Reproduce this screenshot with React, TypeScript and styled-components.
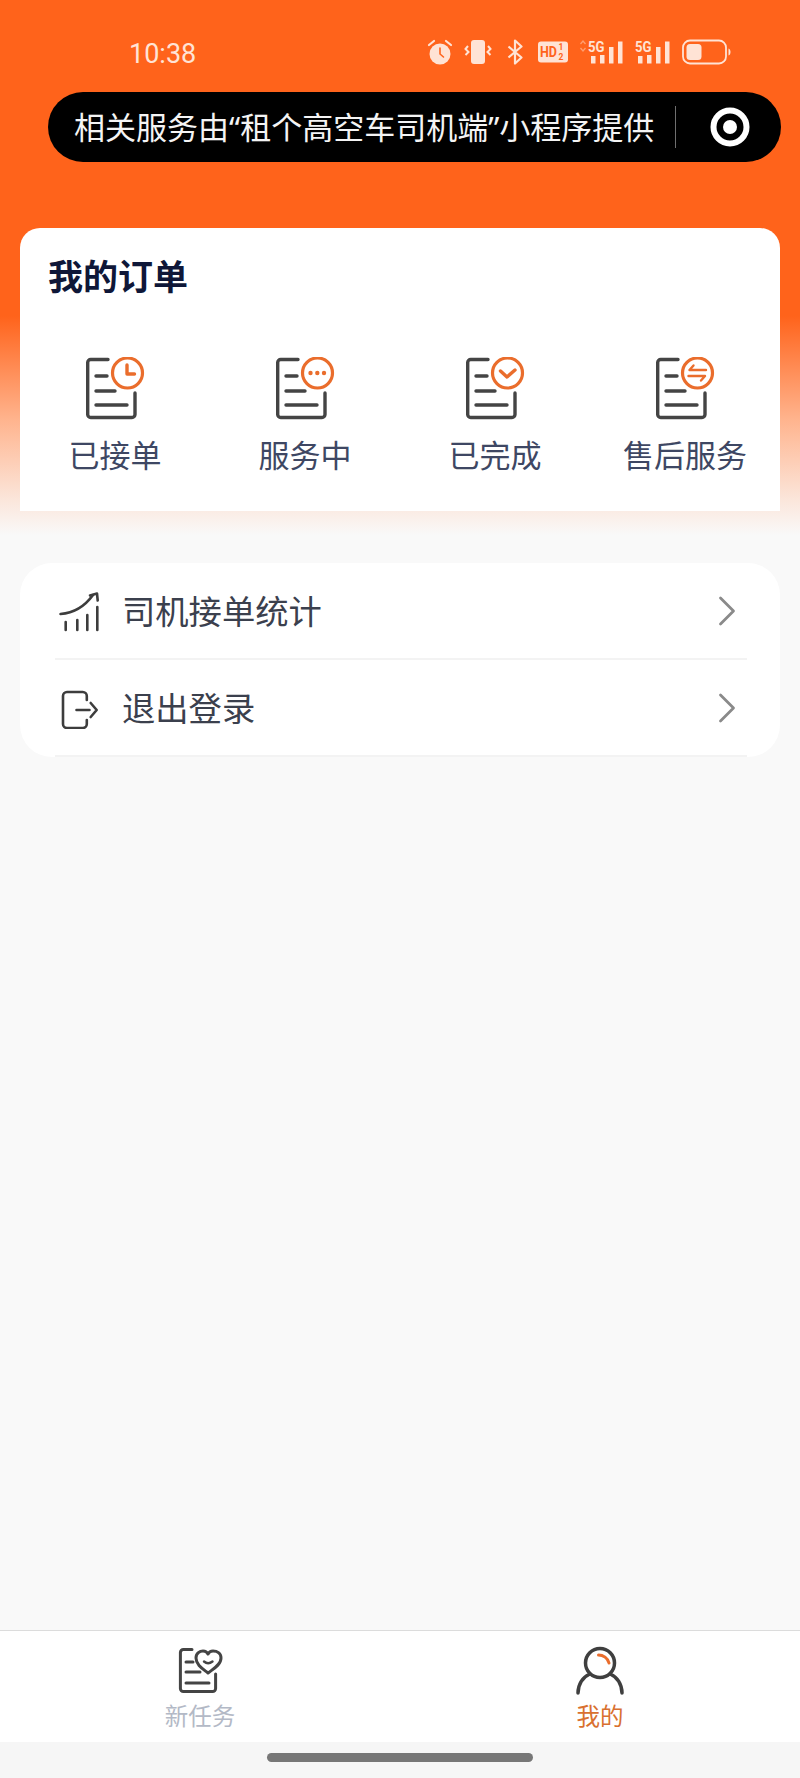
import React from "react";
import styled, { createGlobalStyle } from "styled-components";

const GlobalStyle = createGlobalStyle`
  html, body { margin: 0; padding: 0; background: #f9f9f9; }
  body { font-family: "Noto Sans", "Noto Sans CJK SC", sans-serif; }
  * { box-sizing: border-box; }
`;

const Page = styled.div`
  width: 800px;
  height: 1778px;
  display: flex;
  flex-direction: column;
  overflow: hidden;
  background:
    linear-gradient(#ff631b 0, #ff631b 316px, #ffb48e 420px, #fbe6db 500px, #f9f9f9 535px) no-repeat top / 100% 540px,
    #f9f9f9;
`;

const StatusBar = styled.div`
  height: 92px;
  padding: 12px 69px 0 129px;
  display: flex;
  align-items: center;
  justify-content: space-between;
  color: #ffe3d5;
`;

const Clock = styled.span`
  margin-top: 3px;
  font-family: Roboto, "Liberation Sans", sans-serif;
  font-weight: 400;
  font-size: 27px;
  line-height: 40px;
`;

const StatusIcons = styled.div`
  display: flex;
  align-items: center;
  gap: 11px;
`;

const Capsule = styled.div`
  width: 733px;
  height: 70px;
  margin-left: 48px;
  padding-left: 26px;
  border-radius: 35px;
  background: #000;
  display: flex;
  align-items: center;
`;

const CapsuleText = styled.span`
  width: 601px;
  font-size: 31px;
  line-height: 40px;
  color: #f4f4f4;
  white-space: nowrap;
`;

const CapsuleDivider = styled.span`
  width: 1px;
  height: 42px;
  background: #6f6f6f;
`;

const CapsuleIcon = styled.svg`
  width: 40px;
  height: 40px;
  margin-left: 34px;
`;

const OrderCard = styled.section`
  margin: 66px 20px 0;
  height: 283px;
  padding-top: 29px;
  background: #fff;
  border-radius: 20px 20px 0 0;
`;

const CardTitle = styled.h2`
  margin: 0 0 0 28px;
  font-size: 35px;
  line-height: 40px;
  font-weight: 700;
  color: #0f1738;
`;

const OrderGrid = styled.div`
  margin-top: 60px;
  display: grid;
  grid-template-columns: repeat(4, 1fr);
`;

const OrderItem = styled.div`
  display: flex;
  flex-direction: column;
  align-items: center;
  gap: 14px;
`;

const OrderLabel = styled.span`
  font-size: 31px;
  line-height: 40px;
  color: #3e4763;
  white-space: nowrap;
`;

const MenuCard = styled.section`
  margin: 52px 20px 0;
  height: 194px;
  background: #fff;
  border-radius: 32px;
`;

const MenuRow = styled.div`
  height: 97px;
  margin: 0 33px 0 35px;
  padding: 0 11px 0 4px;
  border-bottom: 2px solid #f3f3f3;
  display: flex;
  align-items: center;
`;

const MenuIcon = styled.svg`
  width: 42px;
  height: 42px;
  flex: none;
`;

const MenuText = styled.span`
  flex: 1;
  margin-left: 21px;
  font-size: 33.3px;
  line-height: 44px;
  color: #3b404d;
`;

const Chevron = styled.svg`
  width: 18px;
  height: 30px;
  flex: none;
`;

const TabBar = styled.nav`
  margin-top: auto;
  height: 112px;
  background: #fff;
  border-top: 1px solid #dcdcdc;
  display: grid;
  grid-template-columns: 1fr 1fr;
`;

const Tab = styled.div`
  padding-top: 15px;
  display: flex;
  flex-direction: column;
  align-items: center;
`;

const TabIcon = styled.svg`
  width: 50px;
  height: 50px;
  flex: none;
`;

const TabLabel = styled.span<{ $active?: boolean }>`
  margin-top: 5px;
  font-size: 23.5px;
  line-height: 30px;
  color: ${(p) => (p.$active ? "#d9702f" : "#b3b9c6")};
`;

const HomeArea = styled.div`
  height: 36px;
  padding-top: 11px;
  background: #f6f6f6;
  display: flex;
  justify-content: center;
`;

const HomeBar = styled.div`
  width: 266px;
  height: 9px;
  border-radius: 5px;
  background: #777;
`;

const ICE = "#ffe3d5";

function Alarm() {
  return (
    <svg width="26" height="26" viewBox="0 0 26 26">
      <circle cx="13" cy="15" r="10.5" fill={ICE} />
      <path d="M13 9v6l3.5 3" stroke="#ff631b" strokeWidth="1.6" fill="none" strokeLinecap="round" />
      <path d="M2 6l5-4M24 6l-5-4" stroke={ICE} strokeWidth="2.2" strokeLinecap="round" />
    </svg>
  );
}

function Vibrate() {
  return (
    <svg width="28" height="26" viewBox="0 0 28 26">
      <rect x="7" y="1" width="14" height="24" rx="3" fill={ICE} />
      <path d="M4 7l-2.500 3 3 3-3 3M24 7l2.500 3-3 3 3 3" stroke={ICE} strokeWidth="2" fill="none" />
    </svg>
  );
}

function Bluetooth() {
  return (
    <svg width="24" height="26" viewBox="0 0 24 26">
      <path d="M5.500 7.500l13 11-6.500 6V1.500l6.500 6-13 11" stroke={ICE} strokeWidth="2.200" fill="none" strokeLinejoin="round" />
    </svg>
  );
}

function HdBadge() {
  return (
    <svg width="30" height="22" viewBox="0 0 30 22">
      <rect width="30" height="21" y="0.500" rx="3" fill={ICE} />
      <text x="2" y="16" fontFamily="Roboto, sans-serif" fontWeight="700" fontSize="14.500" fill="#ff631b" textLength="17" lengthAdjust="spacingAndGlyphs">HD</text>
      <text x="20.500" y="9" fontFamily="Roboto, sans-serif" fontWeight="700" fontSize="8.500" fill="#ff631b">1</text>
      <text x="20.500" y="19" fontFamily="Roboto, sans-serif" fontWeight="700" fontSize="8.500" fill="#ff631b">2</text>
    </svg>
  );
}

function Signal({ arrows }: { arrows?: boolean }) {
  const dx = arrows ? 9 : 0;
  const width = arrows ? 45 : 36;
  return (
    <svg width={width} height="26" viewBox={`0 0 ${width} 26`}>
      {arrows && <path d="M1.500 5l2.500-3 2.500 3M1.500 9l2.500 3 2.500-3" stroke="#ff9e70" strokeWidth="1.300" fill="none" />}
      <text x={dx} y="12.500" fontFamily="Roboto, sans-serif" fontWeight="700" fontSize="15.500" fill={ICE} textLength="16.500" lengthAdjust="spacingAndGlyphs">5G</text>
      <rect x={dx + 3} y="17" width="4.500" height="7.500" fill={ICE} />
      <rect x={dx + 12} y="16" width="4.500" height="8.500" fill={ICE} />
      <rect x={dx + 21} y="8" width="4.500" height="16.500" fill={ICE} />
      <rect x={dx + 30} y="2.500" width="4.500" height="22" fill={ICE} />
    </svg>
  );
}

function Battery() {
  return (
    <svg width="49" height="26" viewBox="0 0 49 26">
      <rect x="1" y="1.500" width="43" height="23" rx="7" fill="none" stroke={ICE} strokeWidth="1.800" />
      <rect x="4.500" y="5" width="15" height="16" rx="3.500" fill={ICE} />
      <path d="M46.500 9.500c1.500.5 2 2 2 3.500s-.5 3-2 3.500z" fill={ICE} />
    </svg>
  );
}

const DARK = "#444444";
const ORANGE = "#ea6d2c";

type BadgeKind = "clock" | "dots" | "check" | "swap";

function Badge({ kind }: { kind: BadgeKind }) {
  if (kind === "clock")
    return <path d="M42 8v9h7.500" stroke={ORANGE} strokeWidth="3.400" fill="none" strokeLinecap="round" strokeLinejoin="round" />;
  if (kind === "dots")
    return (
      <g fill={ORANGE}>
        <circle cx="35.500" cy="16" r="2.200" />
        <circle cx="42.300" cy="16" r="2.200" />
        <circle cx="49" cy="16" r="2.200" />
      </g>
    );
  if (kind === "check")
    return <path d="M35.500 14l6.500 6 8-7" stroke={ORANGE} strokeWidth="3.400" fill="none" strokeLinecap="round" strokeLinejoin="round" />;
  return (
    <path
      d="M51 13H34.500l4-4.500M33.500 19H50l-4 4.500"
      stroke={ORANGE}
      strokeWidth="2.400"
      fill="none"
      strokeLinecap="round"
      strokeLinejoin="round"
    />
  );
}

function OrderIcon({ kind }: { kind: BadgeKind }) {
  return (
    <svg width="60" height="64" viewBox="0 0 60 64">
      <path
        d="M23 2.500H5.700a3 3 0 0 0-3 3v52a3 3 0 0 0 3 3h41.300a3 3 0 0 0 3-3V36"
        stroke={DARK}
        strokeWidth="3.400"
        fill="none"
        strokeLinecap="round"
      />
      <path d="M11 19h11M11 34h19M11 48h31" stroke={DARK} strokeWidth="3.400" strokeLinecap="round" />
      <circle cx="42.500" cy="16" r="15" stroke={ORANGE} strokeWidth="3.200" fill="#fff" />
      <Badge kind={kind} />
    </svg>
  );
}

const orders: { label: string; kind: BadgeKind }[] = [
  { label: "已接单", kind: "clock" },
  { label: "服务中", kind: "dots" },
  { label: "已完成", kind: "check" },
  { label: "售后服务", kind: "swap" },
];

function ChevronRight() {
  return (
    <Chevron viewBox="0 0 18 30">
      <path d="M2.500 2l13 13-13 13" stroke="#8a8a8a" strokeWidth="2.800" fill="none" strokeLinecap="round" strokeLinejoin="round" />
    </Chevron>
  );
}

export default function App() {
  return (
    <Page>
      <GlobalStyle />
      <StatusBar>
        <Clock>10:38</Clock>
        <StatusIcons>
          <Alarm />
          <Vibrate />
          <Bluetooth />
          <HdBadge />
          <Signal arrows />
          <Signal />
          <Battery />
        </StatusIcons>
      </StatusBar>

      <Capsule>
        <CapsuleText>相关服务由“租个高空车司机端”小程序提供</CapsuleText>
        <CapsuleDivider />
        <CapsuleIcon viewBox="0 0 40 40">
          <circle cx="20" cy="20" r="16.500" fill="none" stroke="#fff" strokeWidth="6" />
          <circle cx="20" cy="20" r="7" fill="#fff" />
        </CapsuleIcon>
      </Capsule>

      <OrderCard>
        <CardTitle>我的订单</CardTitle>
        <OrderGrid>
          {orders.map((o) => (
            <OrderItem key={o.label}>
              <OrderIcon kind={o.kind} />
              <OrderLabel>{o.label}</OrderLabel>
            </OrderItem>
          ))}
        </OrderGrid>
      </OrderCard>

      <MenuCard>
        <MenuRow>
          <MenuIcon viewBox="0 0 42 42">
            <path d="M1.500 24C15 23 26 16 34 5" stroke="#3d3d3d" strokeWidth="2.600" fill="none" strokeLinecap="round" />
            <path d="M31 5.500L38 3.500 38.700 10.500" stroke="#3d3d3d" strokeWidth="2.600" fill="none" strokeLinecap="round" strokeLinejoin="round" />
            <path d="M6.700 32v8M18.300 30v10M28.300 25v15M38.300 17v23" stroke="#3d3d3d" strokeWidth="2.600" strokeLinecap="round" />
          </MenuIcon>
          <MenuText>司机接单统计</MenuText>
          <ChevronRight />
        </MenuRow>
        <MenuRow>
          <MenuIcon viewBox="0 0 42 42">
            <path d="M27.800 13V9a4 4 0 0 0-4-4H8a4 4 0 0 0-4 4v28a4 4 0 0 0 4 4h15.800a4 4 0 0 0 4-4v-4" stroke="#3d3d3d" strokeWidth="2.600" fill="none" strokeLinecap="round" />
            <path d="M17.500 23h13M31.700 16l6 7-6 7" stroke="#3d3d3d" strokeWidth="2.600" fill="none" strokeLinecap="round" strokeLinejoin="round" />
          </MenuIcon>
          <MenuText>退出登录</MenuText>
          <ChevronRight />
        </MenuRow>
      </MenuCard>

      <TabBar>
        <Tab>
          <TabIcon viewBox="0 0 50 50">
            <path d="M17 3.500H8.400a3 3 0 0 0-3 3v36a3 3 0 0 0 3 3h29.200a3 3 0 0 0 3-3V28" stroke={DARK} strokeWidth="3" fill="none" strokeLinecap="round" />
            <path d="M11 16h7M11 26h14M11 37h23" stroke={DARK} strokeWidth="3" strokeLinecap="round" />
            <path
              d="M33 27C28 23 21 19 21 12C21 7 25 5 28 5C30 5 32 6 33 8C34 6 36 5 38 5C42 5 46 7 46 12C46 19 38 23 33 27Z"
              stroke={DARK}
              strokeWidth="3"
              fill="#fff"
              strokeLinejoin="round"
            />
            <path d="M29 15.500Q33 19 37.500 15.500" stroke={DARK} strokeWidth="2.400" fill="none" strokeLinecap="round" />
          </TabIcon>
          <TabLabel>新任务</TabLabel>
        </Tab>
        <Tab>
          <TabIcon viewBox="0 0 50 50">
            <circle cx="25" cy="17" r="14.500" stroke="#3f3f3f" strokeWidth="3.500" fill="none" />
            <path d="M3 47C3 38 8 31 14 28.500M47 47C47 38 42 31 36 28.500" stroke="#3f3f3f" strokeWidth="3.500" fill="none" strokeLinecap="round" />
            <path d="M23.500 9C28 9 33 12 34 17" stroke={ORANGE} strokeWidth="3" fill="none" strokeLinecap="round" />
          </TabIcon>
          <TabLabel $active>我的</TabLabel>
        </Tab>
      </TabBar>
      <HomeArea>
        <HomeBar />
      </HomeArea>
    </Page>
  );
}
